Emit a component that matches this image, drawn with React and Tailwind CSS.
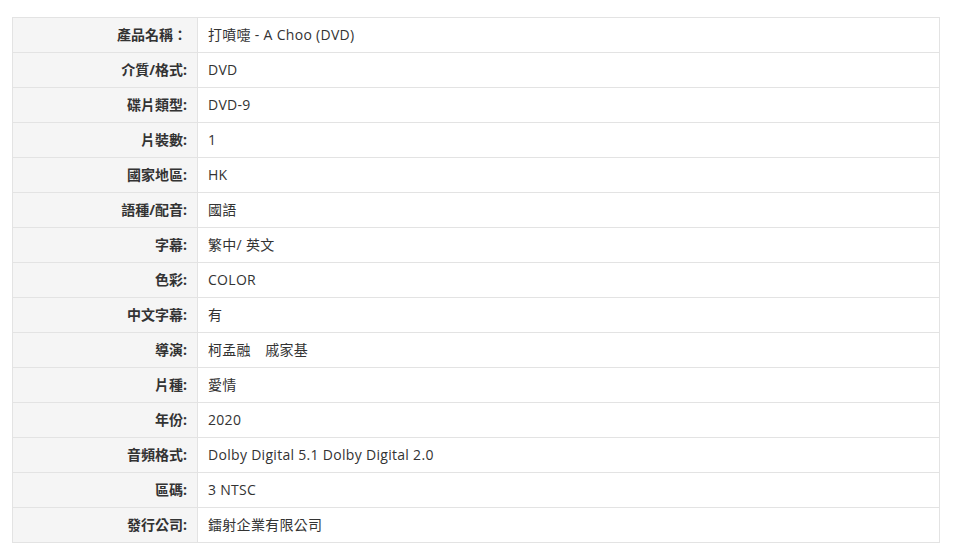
import React from 'react';

const rows = [
  ['產品名稱：', '打噴嚏 - A Choo (DVD)'],
  ['介質/格式:', 'DVD'],
  ['碟片類型:', 'DVD-9'],
  ['片裝數:', '1'],
  ['國家地區:', 'HK'],
  ['語種/配音:', '國語'],
  ['字幕:', '繁中/ 英文'],
  ['色彩:', 'COLOR'],
  ['中文字幕:', '有'],
  ['導演:', '柯孟融\u3000戚家基'],
  ['片種:', '愛情'],
  ['年份:', '2020'],
  ['音頻格式:', 'Dolby Digital 5.1 Dolby Digital 2.0'],
  ['區碼:', '3 NTSC'],
  ['發行公司:', '鐳射企業有限公司'],
];

const App = () => {
  return (
    <div className="bg-white w-[957px] h-[560px] pt-[17px] pl-[12px] font-['Open_Sans','Noto_Sans_CJK_TC',sans-serif] text-[14px] text-[#333]">
      <table className="w-[928px] border-collapse">
        <tbody>
          {rows.map(([label, value]) => (
            <tr key={label} className="h-[35px]">
              <td className="w-[185px] border border-[#e3e3e3] bg-[#f5f5f5] pr-[10px] pb-[2px] text-right font-bold">
                {label}
              </td>
              <td className="border border-[#e3e3e3] pl-[10px] pb-[2px] tracking-[0.3px]">{value}</td>
            </tr>
          ))}
        </tbody>
      </table>
    </div>
  );
};

export default App;
